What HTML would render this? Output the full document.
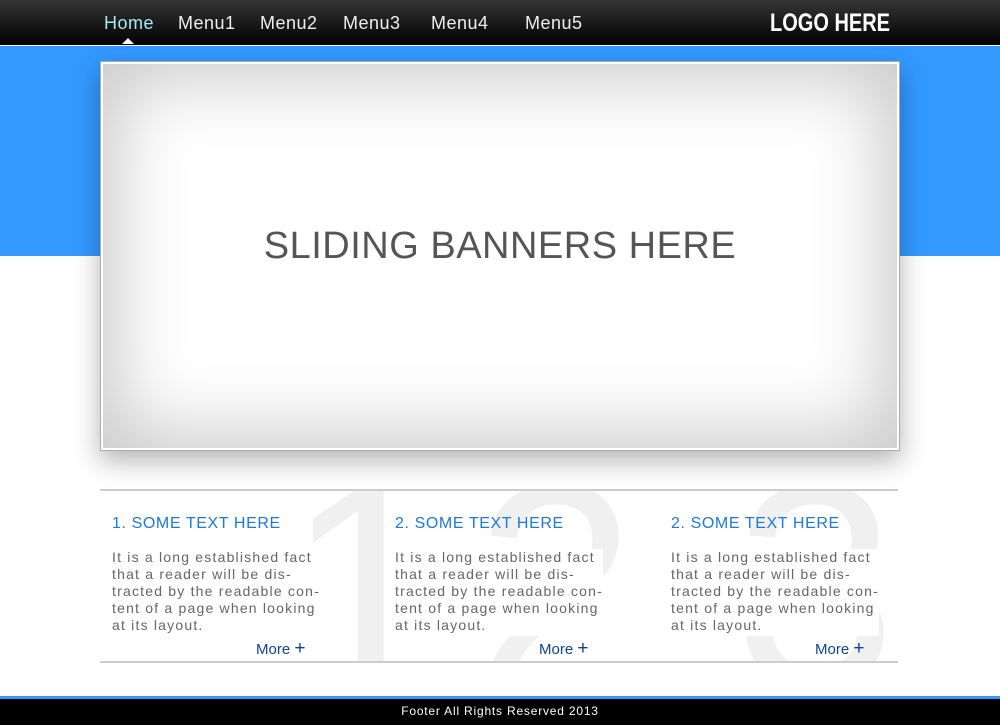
<!DOCTYPE html><html><head><style>
body{margin:0;width:1000px;height:725px;position:relative;background:#fff;font-family:"Liberation Sans",sans-serif;overflow:hidden}
.nav{position:absolute;left:0;top:0;width:1000px;height:45px;background:linear-gradient(#353535,#000);border-bottom:1px solid #fff}
.nav span{position:absolute;top:13px;font-size:18px;color:#eee;letter-spacing:.5px}
.logo{position:absolute;left:770px;top:9px;color:#fff;font-size:25px;font-weight:bold;transform:scaleX(.8);transform-origin:left}
.blue{position:absolute;top:46px;left:0;width:1000px;height:210px;background:#3399ff}
.ban{position:absolute;left:100px;top:61px;width:798px;height:388px;border:1px solid #aaa;box-shadow:inset 0 0 0 2px #fff,inset 0 0 70px 20px rgba(0,0,0,.2),0 10px 25px rgba(0,0,0,.3);background:#fff}
.ban div{position:absolute;width:100%;top:163px;text-align:center;font-size:38px;color:#555;letter-spacing:.5px}
.row{position:absolute;left:100px;top:489px;width:798px;height:170px;border-top:2px solid #ccc;border-bottom:2px solid #ccc;overflow:hidden}
.big{position:absolute;top:-50px;font-size:290px;color:#f0f0f0;line-height:1}
.col{position:absolute;top:24px;width:240px}
.col h3{margin:0;font-weight:normal;color:#1a7ae0;font-size:16px;letter-spacing:.6px}
.col p{margin:16px 0 0;color:#666;font-size:14px;line-height:17px;letter-spacing:1.2px;padding-bottom:2px;display:inline-block;background:#fff}
.more{position:absolute;top:147px;color:#1040a0;font-size:15px}
.fb{position:absolute;top:696px;left:0;width:1000px;height:3px;background:#3399ff}
.ft{position:absolute;top:699px;left:0;width:1000px;height:26px;background:#000;color:#fff;font-size:12px;text-align:center;line-height:25px;letter-spacing:.8px}
</style></head><body>
<div class="nav">
<span style="left:104px;color:#a8e8f0">Home</span><span style="left:178px">Menu1</span><span style="left:260px">Menu2</span><span style="left:343px">Menu3</span><span style="left:431px">Menu4</span><span style="left:525px">Menu5</span>
<div style="position:absolute;left:122px;top:38px;border:6px solid transparent;border-bottom-color:#fff;border-top:0;width:0"></div>
<div class="logo">LOGO HERE</div></div>
<div class="blue"></div>
<div class="ban"><div>SLIDING BANNERS HERE</div></div>
<div class="row">
<div class="big" style="left:185px">1</div><div class="big" style="left:375px">2</div><div class="big" style="left:635px">3</div>
<div class="col" style="left:12px"><h3>1. SOME TEXT HERE</h3><p>It is a long established fact<br>that a reader will be dis-<br>tracted by the readable con-<br>tent of a page when looking<br>at its layout.</p></div>
<div class="col" style="left:295px"><h3>2. SOME TEXT HERE</h3><p>It is a long established fact<br>that a reader will be dis-<br>tracted by the readable con-<br>tent of a page when looking<br>at its layout.</p></div>
<div class="col" style="left:571px"><h3>2. SOME TEXT HERE</h3><p>It is a long established fact<br>that a reader will be dis-<br>tracted by the readable con-<br>tent of a page when looking<br>at its layout.</p></div>
<div class="more" style="left:156px">More <b style="font-size:19px;font-weight:normal">+</b></div>
<div class="more" style="left:439px">More <b style="font-size:19px;font-weight:normal">+</b></div>
<div class="more" style="left:715px">More <b style="font-size:19px;font-weight:normal">+</b></div>
</div>
<div class="fb"></div><div class="ft">Footer All Rights Reserved 2013</div>
</body></html>
